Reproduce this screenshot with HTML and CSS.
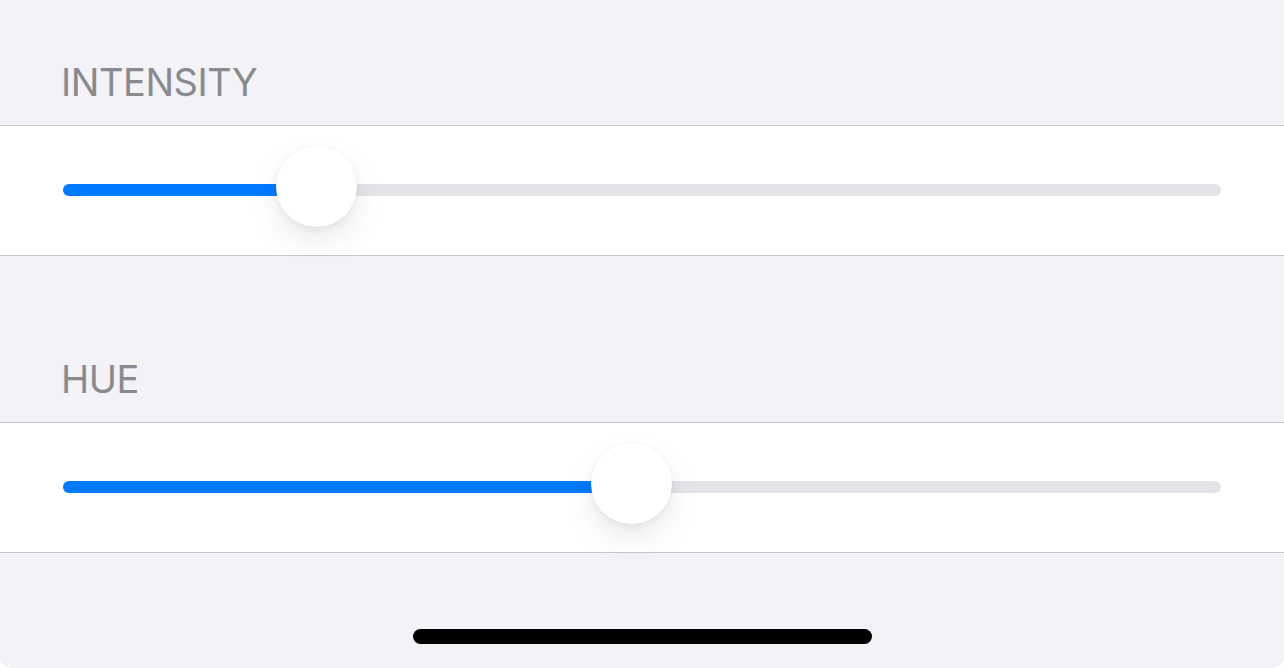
FILE: index.html
```html
<!DOCTYPE html>
<html>
<head>
<meta charset="utf-8">
<link rel="stylesheet" href="styles.css">
</head>
<body>
<div class="screen">
  <div class="header header-first"><span class="label">INTENSITY</span></div>
  <div class="cell">
    <div class="slider">
      <div class="fill" style="--v:0.1978"></div>
      <div class="thumb" style="--v:0.1978"></div>
    </div>
  </div>
  <div class="header header-next"><span class="label">HUE</span></div>
  <div class="cell">
    <div class="slider">
      <div class="fill" style="--v:0.4903"></div>
      <div class="thumb" style="--v:0.4903"></div>
    </div>
  </div>
  <div class="home-area"><div class="home-bar"></div></div>
</div>
</body>
</html>
```
FILE: styles.css
```css
html, body {
  margin: 0;
  padding: 0;
  background: #ffffff;
}
.screen {
  width: 1284px;
  height: 668px;
  background: #f2f2f7;
  border-radius: 0 0 12px 12px;
  overflow: hidden;
  display: flex;
  flex-direction: column;
  font-family: Inter, "Noto Sans", sans-serif;
}
.header {
  display: flex;
  align-items: flex-end;
  padding-left: 61px;
  box-sizing: border-box;
  padding-bottom: 20px;
}
.header-first { height: 125px; }
.header-next { height: 166px; }
.label {
  font-size: 38px;
  line-height: 46px;
  color: #8a8a8e;
  letter-spacing: -0.45px;
}
.cell {
  background: #ffffff;
  border-top: 1px solid #c6c6c8;
  border-bottom: 1px solid #c6c6c8;
  height: 129px;
  padding: 0 63px;
  display: flex;
  align-items: center;
}
.slider {
  position: relative;
  flex: 1;
  height: 12px;
  border-radius: 6px;
  background: #e3e3e8;
  margin-top: -1px;
}
.fill {
  position: absolute;
  left: 0;
  top: 0;
  bottom: 0;
  width: calc(var(--v) * (100% - 81px) + 40px);
  background: #007aff;
  border-radius: 6px 0 0 6px;
}
.thumb {
  position: absolute;
  top: -38px;
  left: calc(var(--v) * (100% - 81px));
  width: 81px;
  height: 81px;
  border-radius: 50%;
  background: #ffffff;
  box-shadow: 0 14px 30px rgba(0, 0, 0, 0.08), 0 4px 8px rgba(0, 0, 0, 0.05), 0 0 0 0.5px rgba(0, 0, 0, 0.03);
}
.home-area {
  flex: 1;
  display: flex;
  justify-content: center;
  padding-top: 76px;
}
.home-bar {
  width: 459px;
  height: 15px;
  border-radius: 8px;
  background: #000000;
}
```
